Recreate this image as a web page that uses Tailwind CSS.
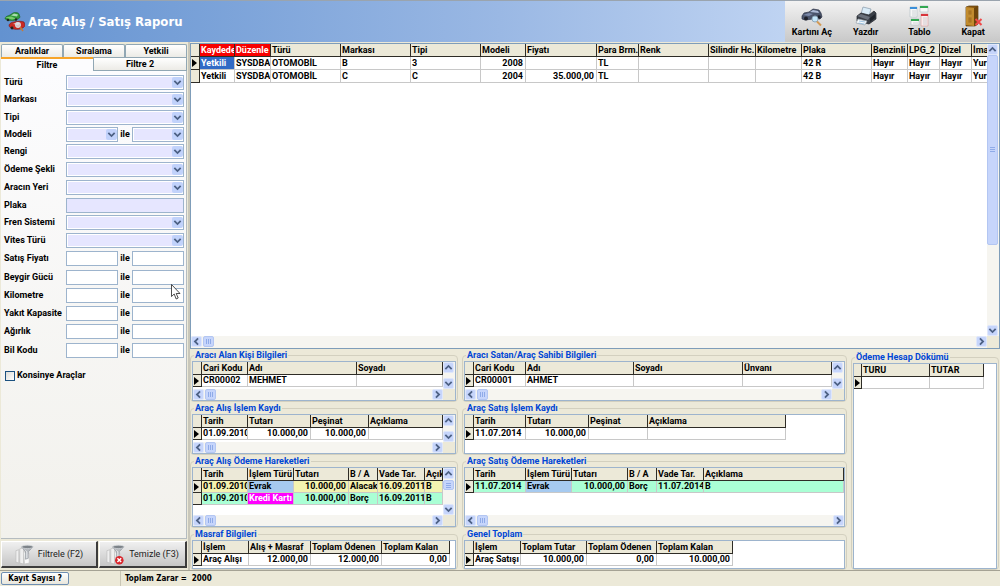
<!DOCTYPE html>
<html lang="tr">
<head>
    <meta charset="UTF-8">
    <meta name="viewport" content="width=device-width, initial-scale=1.0">
    <title>Araç Alış / Satış Raporu</title>
    <script src="https://cdn.jsdelivr.net/npm/@tailwindcss/browser@4"></script>
</head>
<body class="h-screen flex flex-col overflow-hidden bg-[#ece9d8] font-['Roboto',sans-serif] font-bold text-[9px] leading-[11px] text-black cursor-default">

    <!-- shared glyphs -->
    <svg class="hidden">
        <symbol id="up" viewBox="0 0 8 8"><path d="M1.2 5.4 4 2.6l2.8 2.8" fill="none" stroke="#4d6185" stroke-width="1.6"/></symbol>
        <symbol id="down" viewBox="0 0 8 8"><path d="M1.2 2.6 4 5.4l2.8-2.8" fill="none" stroke="#4d6185" stroke-width="1.6"/></symbol>
        <symbol id="left" viewBox="0 0 8 8"><path d="M5.4 1.2 2.6 4l2.8 2.8" fill="none" stroke="#4d6185" stroke-width="1.6"/></symbol>
        <symbol id="right" viewBox="0 0 8 8"><path d="M2.6 1.2 5.4 4 2.6 6.8" fill="none" stroke="#4d6185" stroke-width="1.6"/></symbol>
        <symbol id="row" viewBox="0 0 5 8"><path d="M0 0l5 4-5 4z" fill="#000"/></symbol>
        <symbol id="funnel" viewBox="0 0 20 22">
            <path d="M1 7l3-1v14l-3-1zM5 5l4-1v17l-4-1z" fill="#efefef" stroke="#bcbcbc" stroke-width=".7"/>
            <path d="M9 8l6 2v10l-5 1z" fill="#fafafa" stroke="#c4c4c4" stroke-width=".7"/>
            <path d="M7 3l4 5v8l3-1V8l5-5z" fill="#b4b8bd" stroke="#8b9096" stroke-width=".6"/>
            <path d="M9 5l3 3v7l1 0V8z" fill="#f2f4f6"/>
            <ellipse cx="13" cy="3" rx="6" ry="1.800" fill="#7d8389" stroke="#d2d6da" stroke-width=".8"/>
        </symbol>
    </svg>

    <header class="h-[42px] shrink-0 flex border-t border-[#9aa4ae] bg-linear-to-r from-[#6392d0] via-[#9ab8e4] to-[#dbe8fc]">
        <div class="flex-1 flex items-center pl-1 gap-[3px]">
            <svg class="w-[21px] h-5" viewBox="0 0 21 20">
                <path d="M1 6c1-2 3-2 5-3l3-2c3-1 6 0 6 1l1 3c0 1-2 2-4 3-4 1-11 1-11-2z" fill="#2f9a3a" stroke="#1c5a28" stroke-width=".6"/>
                <path d="M7 3.500l3-2 4 1-1 2z" fill="#a9dcae"/>
                <path d="M1 5.500l6-1 5 2-4 1z" fill="#7bcb6e"/>
                <circle cx="4" cy="8" r="1.200" fill="#222"/><circle cx="12" cy="7.500" r="1.200" fill="#222"/>
                <path d="M5 13c1-2 3-3 5-3 3-1 8-1 10 0l1 3c0 2-2 3-5 4-4 1-11 0-11-4z" fill="#c92a24" stroke="#7d1512" stroke-width=".6"/>
                <path d="M9 12l4-2 4 1-3 2z" fill="#e9b9b5"/>
                <circle cx="8" cy="16" r="1.400" fill="#222"/>
                <circle cx="14" cy="13" r="2.600" fill="#dbe6ef" fill-opacity=".8" stroke="#d7dde2" stroke-width=".8"/>
                <path d="M16 15l3 4" stroke="#c77a35" stroke-width="1.600"/>
            </svg>
            <h1 class="text-[13px] leading-5 text-white font-['DejaVu_Sans_Condensed','DejaVu_Sans',sans-serif]">Araç Alış / Satış Raporu</h1>
        </div>
        <nav class="w-[215px] grid grid-cols-4 bg-linear-to-b from-[#f3f3f3] to-[#c8c8c8] [&_button]:flex [&_button]:flex-col [&_button]:items-center [&_button]:pt-1">
            <button type="button">
                <svg class="w-[22px] h-[22px]" viewBox="0 0 22 22">
                    <path d="M1 11l2-3 5-1 4-3 6 1 2 3 1 4-2 2-7 0-8 1-3-1z" fill="#4b556c" stroke="#2c3448" stroke-width=".7"/>
                    <path d="M9 7l3-2 5 1 1 2z" fill="#aebbd6"/><path d="M2 10l6-2 4 1-4 2z" fill="#7a88a8"/>
                    <circle cx="5" cy="13.500" r="2" fill="#1d2029"/><circle cx="18" cy="12" r="1.800" fill="#1d2029"/>
                    <circle cx="14" cy="14" r="3" fill="#c4e6fa" stroke="#8fa9bb"/>
                    <path d="M16 16.500l4 4" stroke="#d39a55" stroke-width="2"/>
                </svg>
                Kartını Aç
            </button>
            <button type="button">
                <svg class="w-[22px] h-[22px]" viewBox="0 0 22 22">
                    <path d="M6 9l2-7 8 2-2 7z" fill="#d9ecf8" stroke="#8598a8" stroke-width=".7"/>
                    <path d="M2 11l4-3 8 2 5-4 2 2v6l-7 5-12-3z" fill="#3a3f47" stroke="#1f2228" stroke-width=".7"/>
                    <path d="M2 11l4-2 9 3-2 3z" fill="#6a717c"/>
                    <path d="M15 13l5-4v4l-5 4z" fill="#20242b"/>
                    <path d="M3 14l9 2-2 4-9-2z" fill="#f7fafc" stroke="#98a4ae" stroke-width=".7"/>
                    <path d="M4 16l6 1M3.500 18l6 1" stroke="#7fb0d8" stroke-width=".7"/>
                </svg>
                Yazdır
            </button>
            <button type="button">
                <svg class="w-[22px] h-[22px]" viewBox="0 0 22 22">
                    <path d="M2 2h7v10H2z" fill="#f7f7f7" stroke="#b9c3c9" stroke-width=".7"/><path d="M2 2h7v2H2z" fill="#3b8fd9"/>
                    <path d="M12 1h8v6h-8z" fill="#f7f7f7" stroke="#b9c3c9" stroke-width=".7"/><path d="M12 1h8v2h-8z" fill="#34a853"/>
                    <path d="M3 14h8v6H3z" fill="#f7f7f7" stroke="#b9c3c9" stroke-width=".7"/><path d="M3 14h8v2H3z" fill="#34a853"/>
                    <path d="M13 9h7v12h-7z" fill="#fbecec" stroke="#d4a5a5" stroke-width=".7"/><path d="M13 9h7v2h-7z" fill="#d8343c"/>
                    <path d="M4 6h4M4 8h4M4 10h4M5 18h5M15 13h4M15 15h4M15 17h4M15 19h4" stroke="#c5ccd1" stroke-width=".8"/>
                </svg>
                Tablo
            </button>
            <button type="button">
                <svg class="w-[22px] h-[22px]" viewBox="0 0 22 22">
                    <path d="M4 2l3-1h9v18l-3 2H4z" fill="#8a5a12" stroke="#5c3b08" stroke-width=".7"/>
                    <path d="M4 2l8 1v18l-8-1z" fill="#c08a2c"/>
                    <path d="M12 3l4-2v18l-4 2z" fill="#6e460b"/>
                    <path d="M6 5h4v5H6zM6 12h4v6H6z" fill="#a87420" stroke="#c8953c" stroke-width=".6"/>
                    <path d="M13.500 14l6 6M19.500 14l-6 6" stroke="#ef4a4a" stroke-width="2"/>
                </svg>
                Kapat
            </button>
        </nav>
    </header>

    <div class="flex-1 min-h-0 flex">

        <!-- filter panel -->
        <aside class="w-[190px] shrink-0 flex flex-col pt-[2px] pl-px pr-px border-r-2 border-[#c9c7ba]">
            <div class="grid grid-cols-3 text-center [&_button]:h-[13px] [&_button]:border [&_button]:border-b-0 [&_button]:border-[#91a7b4] [&_button]:rounded-t-xs [&_button]:bg-linear-to-b [&_button]:from-white [&_button]:to-[#ecebe6]">
                <button type="button">Aralıklar</button>
                <button type="button">Sıralama</button>
                <button type="button">Yetkili</button>
            </div>
            <div class="flex text-center">
                <button type="button" class="flex-1 h-[14px] border-t-2 border-[#f7a429] bg-[#fcfcfe]">Filtre</button>
                <button type="button" class="flex-1 h-[14px] border border-[#91a7b4] bg-linear-to-b from-white to-[#ecebe6]">Filtre 2</button>
            </div>
            <form id="filters" class="flex-1 flex flex-col pt-[3px] pl-[3px] pr-[2px] border-r border-b border-[#b5bcc0] bg-linear-to-b from-[#fcfcfe] to-[#f2f1ec]
                [&>div]:grid [&>div]:grid-cols-[62px_1fr] [&>div]:items-center [&>div]:h-[18px]
                [&_span]:relative [&_span]:flex-1 [&_span]:min-w-0
                [&_select]:block [&_select]:w-full [&_select]:h-[15px] [&_select]:appearance-none [&_select]:border [&_select]:border-[#9db4cd] [&_select]:bg-[#e6e6ff] [&_select]:shadow-[inset_0_0_0_1px_#fff]
                [&_span_svg]:absolute [&_span_svg]:right-px [&_span_svg]:top-[2px] [&_span_svg]:w-[11px] [&_span_svg]:h-[11px] [&_span_svg]:p-px [&_span_svg]:bg-[#c1d2fb] [&_span_svg]:rounded-xs [&_span_svg]:pointer-events-none
                [&_input[type=text]]:flex-1 [&_input[type=text]]:min-w-0 [&_input[type=text]]:w-full [&_input[type=text]]:h-[15px] [&_input[type=text]]:border [&_input[type=text]]:border-[#9db4cd] [&_input[type=text]]:bg-white">
                <div class="max-h-[17px]"><label for="turu">Türü</label><span><select id="turu"></select><svg><use href="#down"/></svg></span></div>
                <div class="max-h-[17px]"><label for="markasi">Markası</label><span><select id="markasi"></select><svg><use href="#down"/></svg></span></div>
                <div><label for="tipi">Tipi</label><span><select id="tipi"></select><svg><use href="#down"/></svg></span></div>
                <div class="max-h-[17px]"><label for="modeli">Modeli</label><p class="flex gap-[2px] items-center"><span><select id="modeli"></select><svg><use href="#down"/></svg></span><label for="modeli2">ile</label><span><select id="modeli2"></select><svg><use href="#down"/></svg></span></p></div>
                <div class="max-h-[17px]"><label for="rengi">Rengi</label><span><select id="rengi"></select><svg><use href="#down"/></svg></span></div>
                <div><label for="odeme">Ödeme Şekli</label><span><select id="odeme"></select><svg><use href="#down"/></svg></span></div>
                <div><label for="yeri">Aracın Yeri</label><span><select id="yeri"></select><svg><use href="#down"/></svg></span></div>
                <div><label for="plaka">Plaka</label><span class="[&>input]:bg-[#e6e6ff]!"><input type="text" id="plaka" class="block"></span></div>
                <div class="max-h-[17px]"><label for="fren">Fren Sistemi</label><span><select id="fren"></select><svg><use href="#down"/></svg></span></div>
                <div><label for="vites">Vites Türü</label><span><select id="vites"></select><svg><use href="#down"/></svg></span></div>
                <div><label for="fiyat">Satış Fiyatı</label><p class="flex gap-[2px] items-center"><input type="text" id="fiyat"><label for="fiyat2">ile</label><input type="text" id="fiyat2"></p></div>
                <div class="mt-px"><label for="beygir">Beygir Gücü</label><p class="flex gap-[2px] items-center"><input type="text" id="beygir"><label for="beygir2">ile</label><input type="text" id="beygir2"></p></div>
                <div><label for="km">Kilometre</label><p class="flex gap-[2px] items-center"><input type="text" id="km"><label for="km2">ile</label><input type="text" id="km2"></p></div>
                <div><label for="yakit">Yakıt Kapasite</label><p class="flex gap-[2px] items-center"><input type="text" id="yakit"><label for="yakit2">ile</label><input type="text" id="yakit2"></p></div>
                <div><label for="agirlik">Ağırlık</label><p class="flex gap-[2px] items-center"><input type="text" id="agirlik"><label for="agirlik2">ile</label><input type="text" id="agirlik2"></p></div>
                <div class="mt-px"><label for="bil">Bil Kodu</label><p class="flex gap-[2px] items-center"><input type="text" id="bil"><label for="bil2">ile</label><input type="text" id="bil2"></p></div>
                <label class="mt-[11px] flex items-center gap-[2px]"><input type="checkbox" class="appearance-none w-[10px] h-[10px] ml-px border border-[#1c5180] bg-linear-to-br from-[#dcdcd7] to-white">Konsinye Araçlar</label>
            </form>
            <div class="grid grid-cols-[97fr_88fr] gap-px pt-[2px] pb-[2px] font-normal text-[#1a1a1a] [&_button]:h-[27px] [&_button]:flex [&_button]:items-center [&_button]:justify-center [&_button]:gap-1 [&_button]:bg-linear-to-b [&_button]:from-[#f0f0f0] [&_button]:to-[#c6c6c6] [&_button]:border-r-2 [&_button]:border-b-2 [&_button]:border-t [&_button]:border-l [&_button]:border-t-white [&_button]:border-l-white [&_button]:border-r-[#3c3c3c] [&_button]:border-b-[#3c3c3c]">
                <button type="button"><svg class="w-[19px] h-[21px]"><use href="#funnel"/></svg>Filtrele (F2)</button>
                <button type="button">
                    <svg class="w-[19px] h-[21px]" viewBox="0 0 20 22"><use href="#funnel" width="20" height="22"/><circle cx="14" cy="17" r="4.500" fill="#d9262c"/><path d="M12 15l4 4M16 15l-4 4" stroke="#fff" stroke-width="1.500"/></svg>
                    Temizle (F3)
                </button>
            </div>
        </aside>

        <main class="flex-1 min-w-0 flex flex-col pt-px
            [&_table]:table-fixed [&_table]:border-separate [&_table]:border-spacing-0
            [&_th]:h-[13px] [&_th]:p-0 [&_th]:pl-px [&_th]:text-left [&_th]:leading-[11px] [&_th]:whitespace-nowrap [&_th]:overflow-hidden [&_th]:bg-[#ece9d8] [&_th]:border-r [&_th]:border-b [&_th]:border-[#2e2c26]
            [&_td]:h-[12px] [&_td]:p-0 [&_td]:pl-px [&_td]:pr-[2px] [&_td]:leading-[11px] [&_td]:whitespace-nowrap [&_td]:overflow-hidden [&_td]:border-r [&_td]:border-b [&_td]:border-[#c8c8c8]
            [&_td:first-child]:bg-[#ece9d8] [&_td:first-child]:border-[#2e2c26] [&_td:first-child_svg]:w-[5px] [&_td:first-child_svg]:h-[8px] [&_td:first-child_svg]:block
            [&_.bar]:flex [&_.bar]:justify-between [&_.bar]:bg-[#f6f5f0]
            [&_.bar_button]:w-[11px] [&_.bar_button]:h-[11px] [&_.bar_button]:shrink-0 [&_.bar_button]:rounded-xs [&_.bar_button]:bg-[#c6d5fb] [&_.bar_button]:border [&_.bar_button]:border-[#dfe7fb]
            [&_.bar_svg]:w-full [&_.bar_svg]:h-full
            [&_.thumb]:rounded-xs [&_.thumb]:bg-[#c6d5fb] [&_.thumb]:border [&_.thumb]:border-[#b3c6f2] [&_.thumb]:flex [&_.thumb]:items-center [&_.thumb]:justify-center [&_.thumb]:gap-px
            [&_.thumb_i]:bg-[#8fabe8] [&_.thumb_i]:w-px [&_.thumb_i]:h-[5px] [&_.flex-col_.thumb]:flex-col [&_.flex-col_.thumb_i]:w-[5px] [&_.flex-col_.thumb_i]:h-px">

            <!-- vehicle list -->
            <section class="flex-1 min-h-0 grid grid-cols-[minmax(0,1fr)_12px] grid-rows-[minmax(0,1fr)_12px] border border-[#7f9db9] bg-white [&_td]:h-[13px]!">
                <div class="overflow-hidden">
                    <table class="w-full min-w-[797px]">
                        <colgroup>
                            <col class="w-[9px]"><col class="w-[35px]"><col class="w-[36px]"><col class="w-[70px]"><col class="w-[70px]"><col class="w-[70px]"><col class="w-[45px]"><col class="w-[71px]"><col class="w-[42px]"><col class="w-[70px]"><col class="w-[47px]"><col class="w-[46px]"><col class="w-[70px]"><col class="w-[36px]"><col class="w-[32px]"><col class="w-[32px]"><col>
                        </colgroup>
                        <thead>
                            <tr><th></th><th class="bg-[#f80000]! text-white">Kaydede</th><th class="bg-[#f80000]! text-white">Düzenle</th><th>Türü</th><th>Markası</th><th>Tipi</th><th>Modeli</th><th>Fiyatı</th><th>Para Brm.</th><th>Renk</th><th>Silindir Hc.</th><th>Kilometre</th><th>Plaka</th><th>Benzinli</th><th>LPG_2</th><th>Dizel</th><th class="border-r-0!">İma</th></tr>
                        </thead>
                        <tbody>
                            <tr><td><svg><use href="#row"/></svg></td><td class="bg-[#316ac5] text-white">Yetkili</td><td>SYSDBA</td><td>OTOMOBİL</td><td>B</td><td>3</td><td class="text-right">2008</td><td></td><td>TL</td><td></td><td></td><td></td><td>42 R</td><td>Hayır</td><td>Hayır</td><td>Hayır</td><td class="border-r-0! pr-0!">Yur</td></tr>
                            <tr><td></td><td>Yetkili</td><td>SYSDBA</td><td>OTOMOBİL</td><td>C</td><td>C</td><td class="text-right">2004</td><td class="text-right">35.000,00</td><td>TL</td><td></td><td></td><td></td><td>42 B</td><td>Hayır</td><td>Hayır</td><td>Hayır</td><td class="border-r-0! pr-0!">Yur</td></tr>
                        </tbody>
                    </table>
                </div>
                <div class="bar flex-col">
                    <button type="button" aria-label="Yukarı"><svg><use href="#up"/></svg></button>
                    <div class="thumb h-[65%] w-[11px] mb-auto"><i></i><i></i><i></i></div>
                    <button type="button" aria-label="Aşağı"><svg><use href="#down"/></svg></button>
                </div>
                <div class="bar">
                    <button type="button" aria-label="Sol"><svg><use href="#left"/></svg></button>
                    <div class="thumb w-[11px] h-[11px] mr-auto ml-px"><i></i><i></i><i></i></div>
                    <button type="button" aria-label="Sağ"><svg><use href="#right"/></svg></button>
                </div>
                <div class="bg-[#ece9d8]"></div>
            </section>

            <!-- detail groups -->
            <div class="shrink-0 grid grid-cols-[268fr_385fr_148fr] gap-1 pr-px
                [&_fieldset]:min-w-0 [&_fieldset]:px-px [&_fieldset]:border [&_fieldset]:border-[#d3d0bf] [&_fieldset]:rounded-sm
                [&_legend]:ml-[2px] [&_legend]:px-px [&_legend]:h-[12px] [&_legend]:leading-[12px] [&_legend]:text-[#0046d5]
                [&_.box]:border [&_.box]:border-[#9db4cd] [&_.box]:bg-white [&_.box]:overflow-hidden [&_.box]:grid">
                <div class="min-w-0">
                    <fieldset>
                        <legend>Aracı Alan Kişi Bilgileri</legend>
                        <div class="box h-10 grid-cols-[minmax(0,1fr)_12px] grid-rows-[minmax(0,1fr)_11px]">
                            <div>
                                <table class="w-full">
                                    <colgroup><col class="w-[9px]"><col class="w-[46px]"><col class="w-[109px]"><col></colgroup>
                                    <tr><th></th><th>Cari Kodu</th><th>Adı</th><th>Soyadı</th></tr>
                                    <tr><td><svg><use href="#row"/></svg></td><td>CR00002</td><td>MEHMET</td><td></td></tr>
                                </table>
                            </div>
                            <div class="bar flex-col"><button type="button" aria-label="Yukarı"><svg><use href="#up"/></svg></button><button type="button" aria-label="Aşağı"><svg><use href="#down"/></svg></button></div>
                            <div class="bar"><button type="button" aria-label="Sol"><svg><use href="#left"/></svg></button><div class="thumb w-[11px] mr-auto ml-px"><i></i><i></i><i></i></div><button type="button" aria-label="Sağ"><svg><use href="#right"/></svg></button></div>
                            <div class="bg-[#ece9d8]"></div>
                        </div>
                    </fieldset>
                    <fieldset>
                        <legend>Araç Alış İşlem Kaydı</legend>
                        <div class="box h-10 grid-cols-[minmax(0,1fr)_12px] grid-rows-[minmax(0,1fr)_11px]">
                            <div>
                                <table class="w-full">
                                    <colgroup><col class="w-[9px]"><col class="w-[46px]"><col class="w-[63px]"><col class="w-[58px]"><col></colgroup>
                                    <tr><th></th><th>Tarih</th><th>Tutarı</th><th>Peşinat</th><th>Açıklama</th></tr>
                                    <tr><td><svg><use href="#row"/></svg></td><td>01.09.2010</td><td class="text-right">10.000,00</td><td class="text-right">10.000,00</td><td></td></tr>
                                </table>
                            </div>
                            <div class="bar flex-col"><button type="button" aria-label="Yukarı"><svg><use href="#up"/></svg></button><button type="button" aria-label="Aşağı"><svg><use href="#down"/></svg></button></div>
                            <div class="bar"><button type="button" aria-label="Sol"><svg><use href="#left"/></svg></button><div class="thumb w-[11px] mr-auto ml-px"><i></i><i></i><i></i></div><button type="button" aria-label="Sağ"><svg><use href="#right"/></svg></button></div>
                            <div class="bg-[#ece9d8]"></div>
                        </div>
                    </fieldset>
                    <fieldset>
                        <legend>Araç Alış Ödeme Hareketleri</legend>
                        <div class="box h-[60px] grid-cols-[minmax(0,1fr)_12px] grid-rows-[minmax(0,1fr)_11px]">
                            <div>
                                <table class="w-full">
                                    <colgroup><col class="w-[9px]"><col class="w-[46px]"><col class="w-[46px]"><col class="w-[55px]"><col class="w-[29px]"><col class="w-[47px]"><col></colgroup>
                                    <tr><th></th><th>Tarih</th><th>İşlem Türü</th><th>Tutarı</th><th>B / A</th><th>Vade Tar.</th><th>Açıkl</th></tr>
                                    <tr class="bg-[#f3f3b0]"><td><svg><use href="#row"/></svg></td><td>01.09.2010</td><td class="bg-[#a6caf0]">Evrak</td><td class="text-right">10.000,00</td><td>Alacak</td><td>16.09.2011</td><td>B</td></tr>
                                    <tr class="bg-[#aaffd5]"><td></td><td>01.09.2010</td><td class="bg-[#ff00ff] text-white">Kredi Kartı</td><td class="text-right">10.000,00</td><td>Borç</td><td>16.09.2011</td><td>B</td></tr>
                                </table>
                            </div>
                            <div class="bar flex-col"><button type="button" aria-label="Yukarı"><svg><use href="#up"/></svg></button><div class="thumb w-[11px] h-[10px] mb-auto mt-px"><i></i><i></i><i></i></div><button type="button" aria-label="Aşağı"><svg><use href="#down"/></svg></button></div>
                            <div class="bar"><button type="button" aria-label="Sol"><svg><use href="#left"/></svg></button><div class="thumb w-[11px] mr-auto ml-px"><i></i><i></i><i></i></div><button type="button" aria-label="Sağ"><svg><use href="#right"/></svg></button></div>
                            <div class="bg-[#ece9d8]"></div>
                        </div>
                    </fieldset>
                    <fieldset>
                        <legend>Masraf Bilgileri</legend>
                        <div class="box h-[29px] content-start">
                            <table class="w-[257px]">
                                <colgroup><col class="w-[9px]"><col class="w-[47px]"><col class="w-[62px]"><col class="w-[71px]"><col></colgroup>
                                <tr><th></th><th>İşlem</th><th>Alış + Masraf</th><th>Toplam Ödenen</th><th>Toplam Kalan</th></tr>
                                <tr><td><svg><use href="#row"/></svg></td><td>Araç Alışı</td><td class="text-right">12.000,00</td><td class="text-right">12.000,00</td><td class="text-right">0,00</td></tr>
                            </table>
                        </div>
                    </fieldset>
                </div>
                <div class="min-w-0">
                    <fieldset>
                        <legend>Aracı Satan/Araç Sahibi Bilgileri</legend>
                        <div class="box h-10 grid-cols-[minmax(0,1fr)_12px] grid-rows-[minmax(0,1fr)_11px]">
                            <div>
                                <table class="w-full">
                                    <colgroup><col class="w-[9px]"><col class="w-[52px]"><col class="w-[108px]"><col class="w-[109px]"><col></colgroup>
                                    <tr><th></th><th>Cari Kodu</th><th>Adı</th><th>Soyadı</th><th>Ünvanı</th></tr>
                                    <tr><td><svg><use href="#row"/></svg></td><td>CR00001</td><td>AHMET</td><td></td><td></td></tr>
                                </table>
                            </div>
                            <div class="bar flex-col"><button type="button" aria-label="Yukarı"><svg><use href="#up"/></svg></button><button type="button" aria-label="Aşağı"><svg><use href="#down"/></svg></button></div>
                            <div class="bar"><button type="button" aria-label="Sol"><svg><use href="#left"/></svg></button><div class="thumb w-[11px] mr-auto ml-px"><i></i><i></i><i></i></div><button type="button" aria-label="Sağ"><svg><use href="#right"/></svg></button></div>
                            <div class="bg-[#ece9d8]"></div>
                        </div>
                    </fieldset>
                    <fieldset>
                        <legend>Araç Satış İşlem Kaydı</legend>
                        <div class="box h-10 content-start">
                            <table class="w-[321px]">
                                <colgroup><col class="w-[9px]"><col class="w-[52px]"><col class="w-[63px]"><col class="w-[59px]"><col></colgroup>
                                <tr><th></th><th>Tarih</th><th>Tutarı</th><th>Peşinat</th><th>Açıklama</th></tr>
                                <tr><td><svg><use href="#row"/></svg></td><td>11.07.2014</td><td class="text-right">10.000,00</td><td></td><td></td></tr>
                            </table>
                        </div>
                    </fieldset>
                    <fieldset>
                        <legend>Araç Satış Ödeme Hareketleri</legend>
                        <div class="box h-[60px] grid-cols-[minmax(0,1fr)] grid-rows-[minmax(0,1fr)_11px]">
                            <div>
                                <table class="w-full">
                                    <colgroup><col class="w-[9px]"><col class="w-[52px]"><col class="w-[46px]"><col class="w-[56px]"><col class="w-[29px]"><col class="w-[47px]"><col></colgroup>
                                    <tr><th></th><th>Tarih</th><th>İşlem Türü</th><th>Tutarı</th><th>B / A</th><th>Vade Tar.</th><th>Açıklama</th></tr>
                                    <tr class="bg-[#aaffd5]"><td><svg><use href="#row"/></svg></td><td>11.07.2014</td><td class="bg-[#a6caf0]">Evrak</td><td class="text-right">10.000,00</td><td>Borç</td><td>11.07.2014</td><td>B</td></tr>
                                </table>
                            </div>
                            <div class="bar"><button type="button" aria-label="Sol"><svg><use href="#left"/></svg></button><div class="thumb w-[11px] mr-auto ml-px"><i></i><i></i><i></i></div><button type="button" aria-label="Sağ"><svg><use href="#right"/></svg></button></div>
                        </div>
                    </fieldset>
                    <fieldset>
                        <legend>Genel Toplam</legend>
                        <div class="box h-[29px] content-start">
                            <table class="w-[268px]">
                                <colgroup><col class="w-[9px]"><col class="w-[47px]"><col class="w-[66px]"><col class="w-[70px]"><col></colgroup>
                                <tr><th></th><th>İşlem</th><th>Toplam Tutar</th><th>Toplam Ödenen</th><th>Toplam Kalan</th></tr>
                                <tr><td><svg><use href="#row"/></svg></td><td>Araç Satışı</td><td class="text-right">10.000,00</td><td class="text-right">0,00</td><td class="text-right">10.000,00</td></tr>
                            </table>
                        </div>
                    </fieldset>
                </div>
                <fieldset class="mt-[2px] grid">
                    <legend>Ödeme Hesap Dökümü</legend>
                    <div class="box content-start">
                        <table class="w-[130px]">
                            <colgroup><col class="w-[8px]"><col class="w-[68px]"><col></colgroup>
                            <tr><th></th><th>TURU</th><th>TUTAR</th></tr>
                            <tr><td><svg><use href="#row"/></svg></td><td></td><td></td></tr>
                        </table>
                    </div>
                </fieldset>
            </div>
        </main>
    </div>

    <footer class="h-4 shrink-0 flex items-stretch border-t border-[#a5a294] font-['DejaVu_Sans_Condensed','DejaVu_Sans',sans-serif] text-[8px]">
        <button type="button" class="w-[68px] ml-px my-px border border-[#6f8fb3] rounded-xs bg-linear-to-b from-white to-[#e8e6dc]">Kayıt Sayısı ?</button>
        <p class="ml-[51px] pl-1 flex items-center border-l border-[#c9c6b5] whitespace-pre">Toplam Zarar =  2000</p>
    </footer>

    <!-- mouse pointer -->
    <svg class="absolute left-[171px] top-[284px] w-[10px] h-4" viewBox="0 0 10 16">
        <path d="M.5.5v12l2.700-2.500 2 5 2-1-2-4.500h3.800z" fill="#fff" stroke="#222" stroke-width=".8"/>
    </svg>
</body>
</html>
